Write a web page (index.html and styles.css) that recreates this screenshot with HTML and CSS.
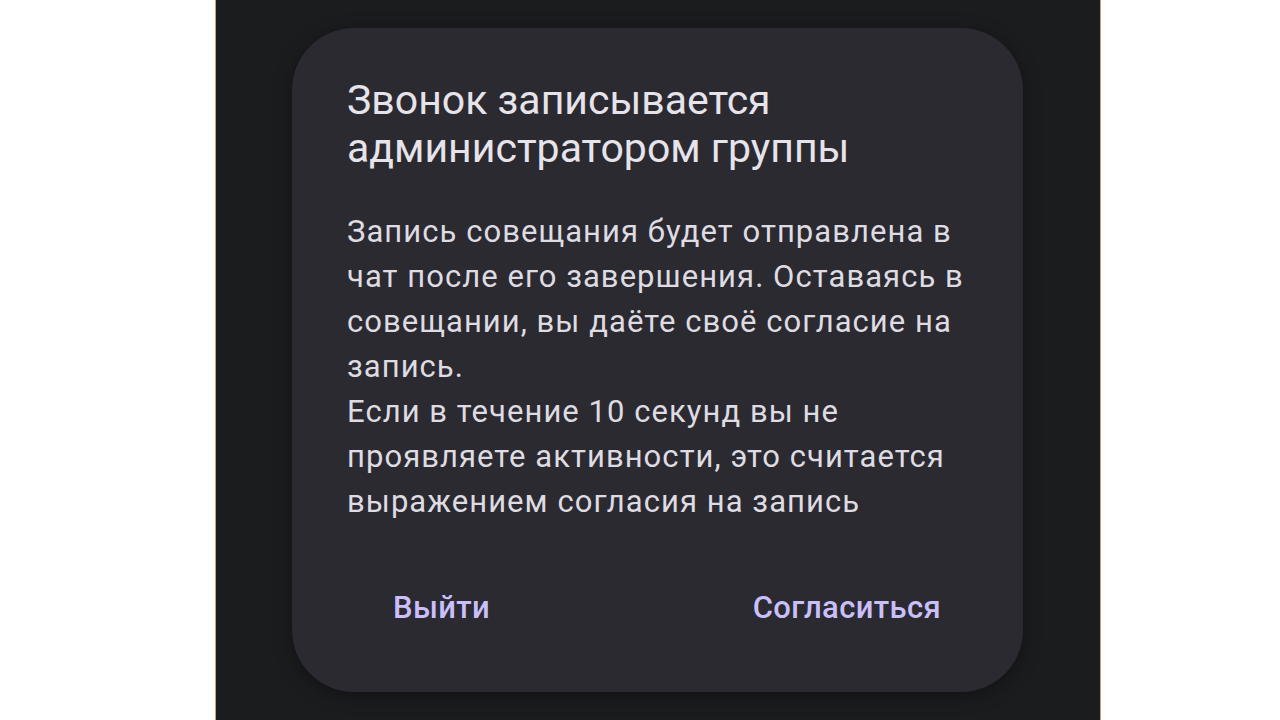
FILE: index.html
```html
<!DOCTYPE html>
<html lang="ru">
<head>
  <meta charset="UTF-8">
  <title>Запись звонка</title>
  <link rel="stylesheet" href="styles.css">
</head>
<body>

  <div class="screen">
    <div class="dialog">
      <h2 class="dialog-title">Звонок записывается администратором группы</h2>
      <p class="dialog-text">Запись совещания будет отправлена в чат после его завершения. Оставаясь в совещании, вы даёте своё согласие на запись.<br>Если в течение 10 секунд вы не проявляете активности, это считается выражением согласия на запись</p>
      <div class="dialog-actions">
        <button class="btn">Выйти</button>
        <button class="btn">Согласиться</button>
      </div>
    </div>
  </div>

</body>
</html>
```

FILE: styles.css
```css
* {
  margin: 0;
  padding: 0;
  box-sizing: border-box;
  font-family: Roboto, 'Noto Sans', sans-serif;
}

body {
  background: #ffffff;
  height: 720px;
  overflow: hidden;
  padding-left: 215px;
}

.screen {
  width: 886px;
  height: 720px;
  background: #1b1c1e;
  border-left: 1px solid #d49a70;
  border-right: 1px solid #d49a70;
  padding: 28px 77px 0 76px;
}

.dialog {
  background: #2b2a31;
  border-radius: 62px;
  height: 664px;
  padding: 48px 55px 0 55px;
  box-shadow: 0 4px 18px rgba(0, 0, 0, 0.35);
}

.dialog-title {
  font-size: 41px;
  font-weight: 400;
  line-height: 48px;
  color: #e6e4ea;
  width: 560px;
  margin-bottom: 37px;
}

.dialog-text {
  font-size: 31px;
  line-height: 45px;
  letter-spacing: 1.05px;
  color: #dedce2;
}

.dialog-actions {
  display: flex;
  justify-content: space-between;
  margin-top: 66px;
  padding: 0 27px 0 46px;
}

.btn {
  background: none;
  border: none;
  color: #c9bffa;
  font-size: 31px;
  font-weight: 500;
  line-height: 36px;
  letter-spacing: 0.35px;
  cursor: pointer;
}
```
